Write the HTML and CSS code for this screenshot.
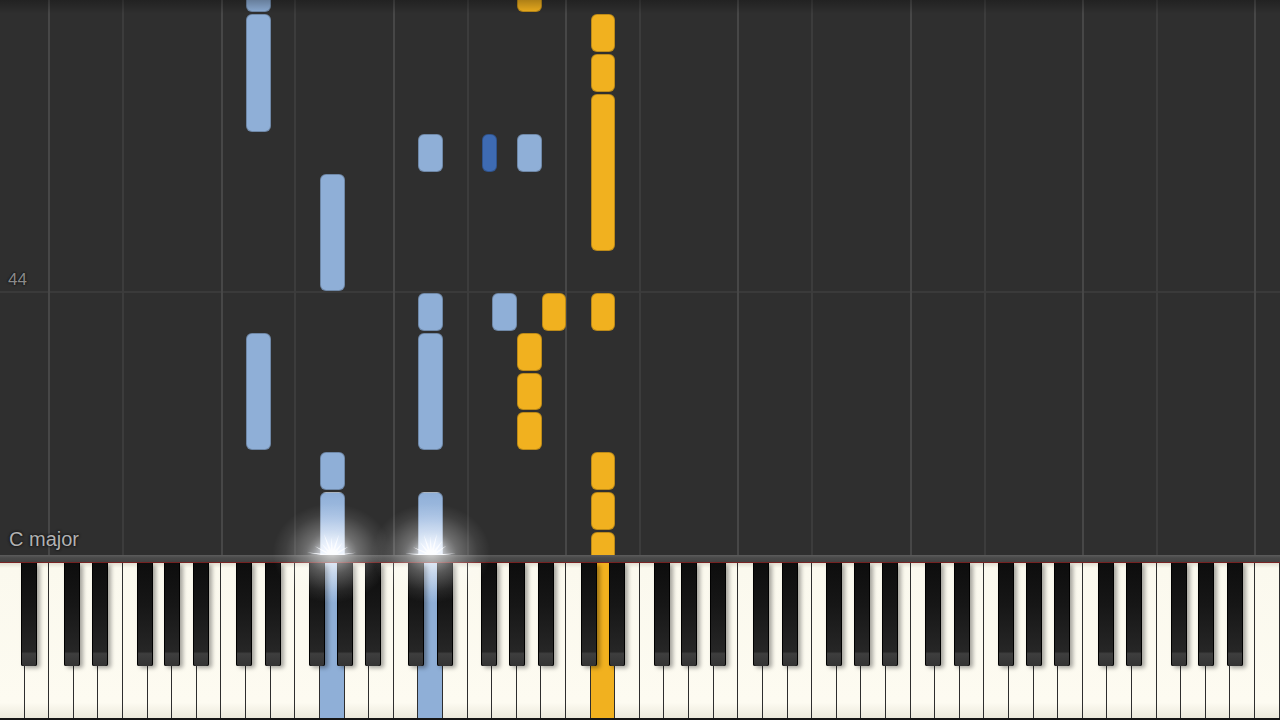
FILE: index.html
```html
<!DOCTYPE html>
<html>
<head>
<meta charset="utf-8">
<title>Piano roll</title>
<link rel="stylesheet" href="styles.css">
</head>
<body>
<div class="app">
  <div class="roll" id="roll">
    <div class="hline"></div>
    <span class="measure-num">44</span>
    <span class="key-sig">C major</span>
    <svg class="burst burst-a" viewBox="0 0 60 30" width="56" height="28"><polygon points="34,30 55.7,26.4 35.7,28.1 47.3,20 35.4,25.5 41.1,15.8 33.3,23.8 37.4,7.2 31,23.1 29.3,10 28.8,23.1 21.4,6.5 26.5,23.9 19.1,17 25.4,26.1 11.8,19.5 24.4,27.9 3.3,26.2 26,30"/></svg>
    <svg class="burst burst-b" viewBox="0 0 60 30" width="56" height="28"><polygon points="34,30 56.7,27.4 35.7,28.1 46.3,19 35.4,25.5 42.1,13.8 33.3,23.8 36.4,6.2 31,23.1 29.3,9 28.8,23.1 22.4,7.5 26.5,23.9 18.1,15 25.4,26.1 10.8,20.5 24.4,27.9 2.3,27.2 26,30"/></svg>
    <div class="top-shade"></div>
  </div>
  <div class="rail"></div>
  <div class="keyboard" id="keyboard"></div>
  <div class="glow glow-a"></div>
  <div class="glow glow-b"></div>
</div>
<script src="script.js"></script>
</body>
</html>
```

FILE: styles.css
```css
* { box-sizing: border-box; margin: 0; padding: 0; }
html, body { width: 1280px; height: 720px; overflow: hidden; background: #2f2f2f; }
body { font-family: "Liberation Sans", Arial, sans-serif; }

.app { position: relative; width: 1280px; height: 720px; display: flex; flex-direction: column; }

.roll { position: relative; flex: none; height: 555px; overflow: hidden; background: #2f2f2f; }
.top-shade { position: absolute; left: 0; right: 0; top: 0; height: 14px; background: linear-gradient(rgba(0,0,0,0.28), rgba(0,0,0,0)); z-index: 5; }

.vline { position: absolute; top: 0; bottom: 0; width: 2px; background: #3c3c3c; }
.vline.c { background: #474747; }
.hline { position: absolute; left: 0; right: 0; top: 291px; height: 2px; background: #3a3a3a; }

.measure-num { position: absolute; left: 8px; top: 271px; font-size: 17px; line-height: 1; color: #8a8a8a; text-shadow: 0 0 2px #111, 0 0 2px #111; z-index: 3; }
.key-sig { position: absolute; left: 9px; top: 529px; font-size: 20px; line-height: 1; color: #b2b2b2; text-shadow: 0 0 3px #111, 0 0 2px #111; z-index: 3; }

.note { position: absolute; border-radius: 6px; border: 1px solid rgba(0,0,0,0.22); z-index: 2; }
.note.lb { background: #8fafd7; }
.note.db { background: #3e6bb3; }
.note.gd { background: #f1b11f; }
.note.lb.play { background: linear-gradient(#8fafd7 0, #a7c1e4 28px, #dce8f8 60px); }

.burst { position: absolute; bottom: -1px; z-index: 4; fill: #f6f9ff; filter: drop-shadow(0 0 2px #d8e6ff) drop-shadow(0 0 5px rgba(220,232,255,0.9)); }
.burst-a { left: 304px; }
.burst-b { left: 403px; }

.rail { flex: none; height: 8px; background: linear-gradient(#5c5c5c, #4a4a4a 40%, #424242); border-bottom: 1px solid #7a2323; }

.keyboard { position: relative; flex: 1; display: flex; background: #222; border-bottom: 2px solid #151515; }
.white { flex: 1; background: linear-gradient(#e2dfd2, #fbf9ee 5px, #fdfbf1 90%, #ece9dc); border-right: 1px solid #2e2e2e; }
.white.blue { background: linear-gradient(#b9cde8, #8fafd7 40px, #8fafd7); }
.white.gold { background: #f1b11f; }

.black { position: absolute; top: 0; width: 16px; height: 103px; border-radius: 0 0 2px 2px; background: linear-gradient(#0d0d0d, #161616 40%, #262626 86%, #3e3e3e 88%, #333 100%); box-shadow: 3px 2px 4px rgba(0,0,0,0.35), inset 1px 0 0 #000, inset -1px 0 0 #000; z-index: 2; }

.glow { position: absolute; width: 120px; height: 100px; top: 503px; border-radius: 50%; background: radial-gradient(ellipse at center, rgba(255,255,255,0.7), rgba(255,255,255,0.3) 30%, rgba(255,255,255,0.08) 55%, rgba(255,255,255,0) 70%); pointer-events: none; z-index: 6; }
.glow-a { left: 272px; }
.glow-b { left: 371px; }
```

FILE: script.js
```js
(function () {
  var W = 1280 / 52;
  var names = ['A', 'B', 'C', 'D', 'E', 'F', 'G'];
  var roll = document.getElementById('roll');
  var kb = document.getElementById('keyboard');
  var pressed = { 13: 'blue', 17: 'blue', 24: 'gold' };

  for (var i = 0; i < 52; i++) {
    var k = document.createElement('div');
    k.className = 'white' + (pressed[i] ? ' ' + pressed[i] : '');
    kb.appendChild(k);
    var n = names[i % 7];
    if ((n === 'C' || n === 'F') && i > 0) {
      var l = document.createElement('div');
      l.className = 'vline' + (n === 'C' ? ' c' : '');
      l.style.left = (i * W - 1).toFixed(2) + 'px';
      roll.appendChild(l);
    }
  }

  var off = { A: 4, C: -2, D: 2, F: -3, G: 0 };
  for (var j = 0; j < 51; j++) {
    var nm = names[j % 7];
    if (off.hasOwnProperty(nm)) {
      var b = document.createElement('div');
      b.className = 'black';
      b.style.left = ((j + 1) * W + off[nm] - 8).toFixed(2) + 'px';
      kb.appendChild(b);
    }
  }

  function L(k) { return 292 + 39.8 * k; }
  var notes = [
    [10, -8, -7, 'lb'], [10, -7, -4, 'lb'], [10, 1, 4, 'lb'],
    [13, -3, 0, 'lb'], [13, 4, 5, 'lb'], [13, 5, 7, 'lb play'],
    [17, -4, -3, 'lb'], [17, 0, 1, 'lb'], [17, 1, 4, 'lb'], [17, 5, 7, 'lb play'],
    [21, -4, -3, 'lb'], [20, 0, 1, 'lb'],
    [21, -8, -7, 'gd'], [21, 1, 2, 'gd'], [21, 2, 3, 'gd'], [21, 3, 4, 'gd'],
    [22, 0, 1, 'gd'],
    [24, -7, -6, 'gd'], [24, -6, -5, 'gd'], [24, -5, -1, 'gd'], [24, 0, 1, 'gd'],
    [24, 4, 5, 'gd'], [24, 5, 6, 'gd'], [24, 6, 7, 'gd play']
  ];
  notes.forEach(function (d) {
    var e = document.createElement('div');
    e.className = 'note ' + d[3];
    e.style.left = (d[0] * W).toFixed(2) + 'px';
    e.style.width = (W).toFixed(2) + 'px';
    e.style.top = (L(d[1]) + 1).toFixed(2) + 'px';
    e.style.height = (L(d[2]) - L(d[1]) - 2).toFixed(2) + 'px';
    roll.appendChild(e);
  });
  // F#3 black-key note
  var fs = document.createElement('div');
  fs.className = 'note db';
  fs.style.left = (20 * W - 3 - 7.5).toFixed(2) + 'px';
  fs.style.width = '15px';
  fs.style.top = (L(-4) + 1).toFixed(2) + 'px';
  fs.style.height = (L(-3) - L(-4) - 2).toFixed(2) + 'px';
  roll.appendChild(fs);
})();
```
